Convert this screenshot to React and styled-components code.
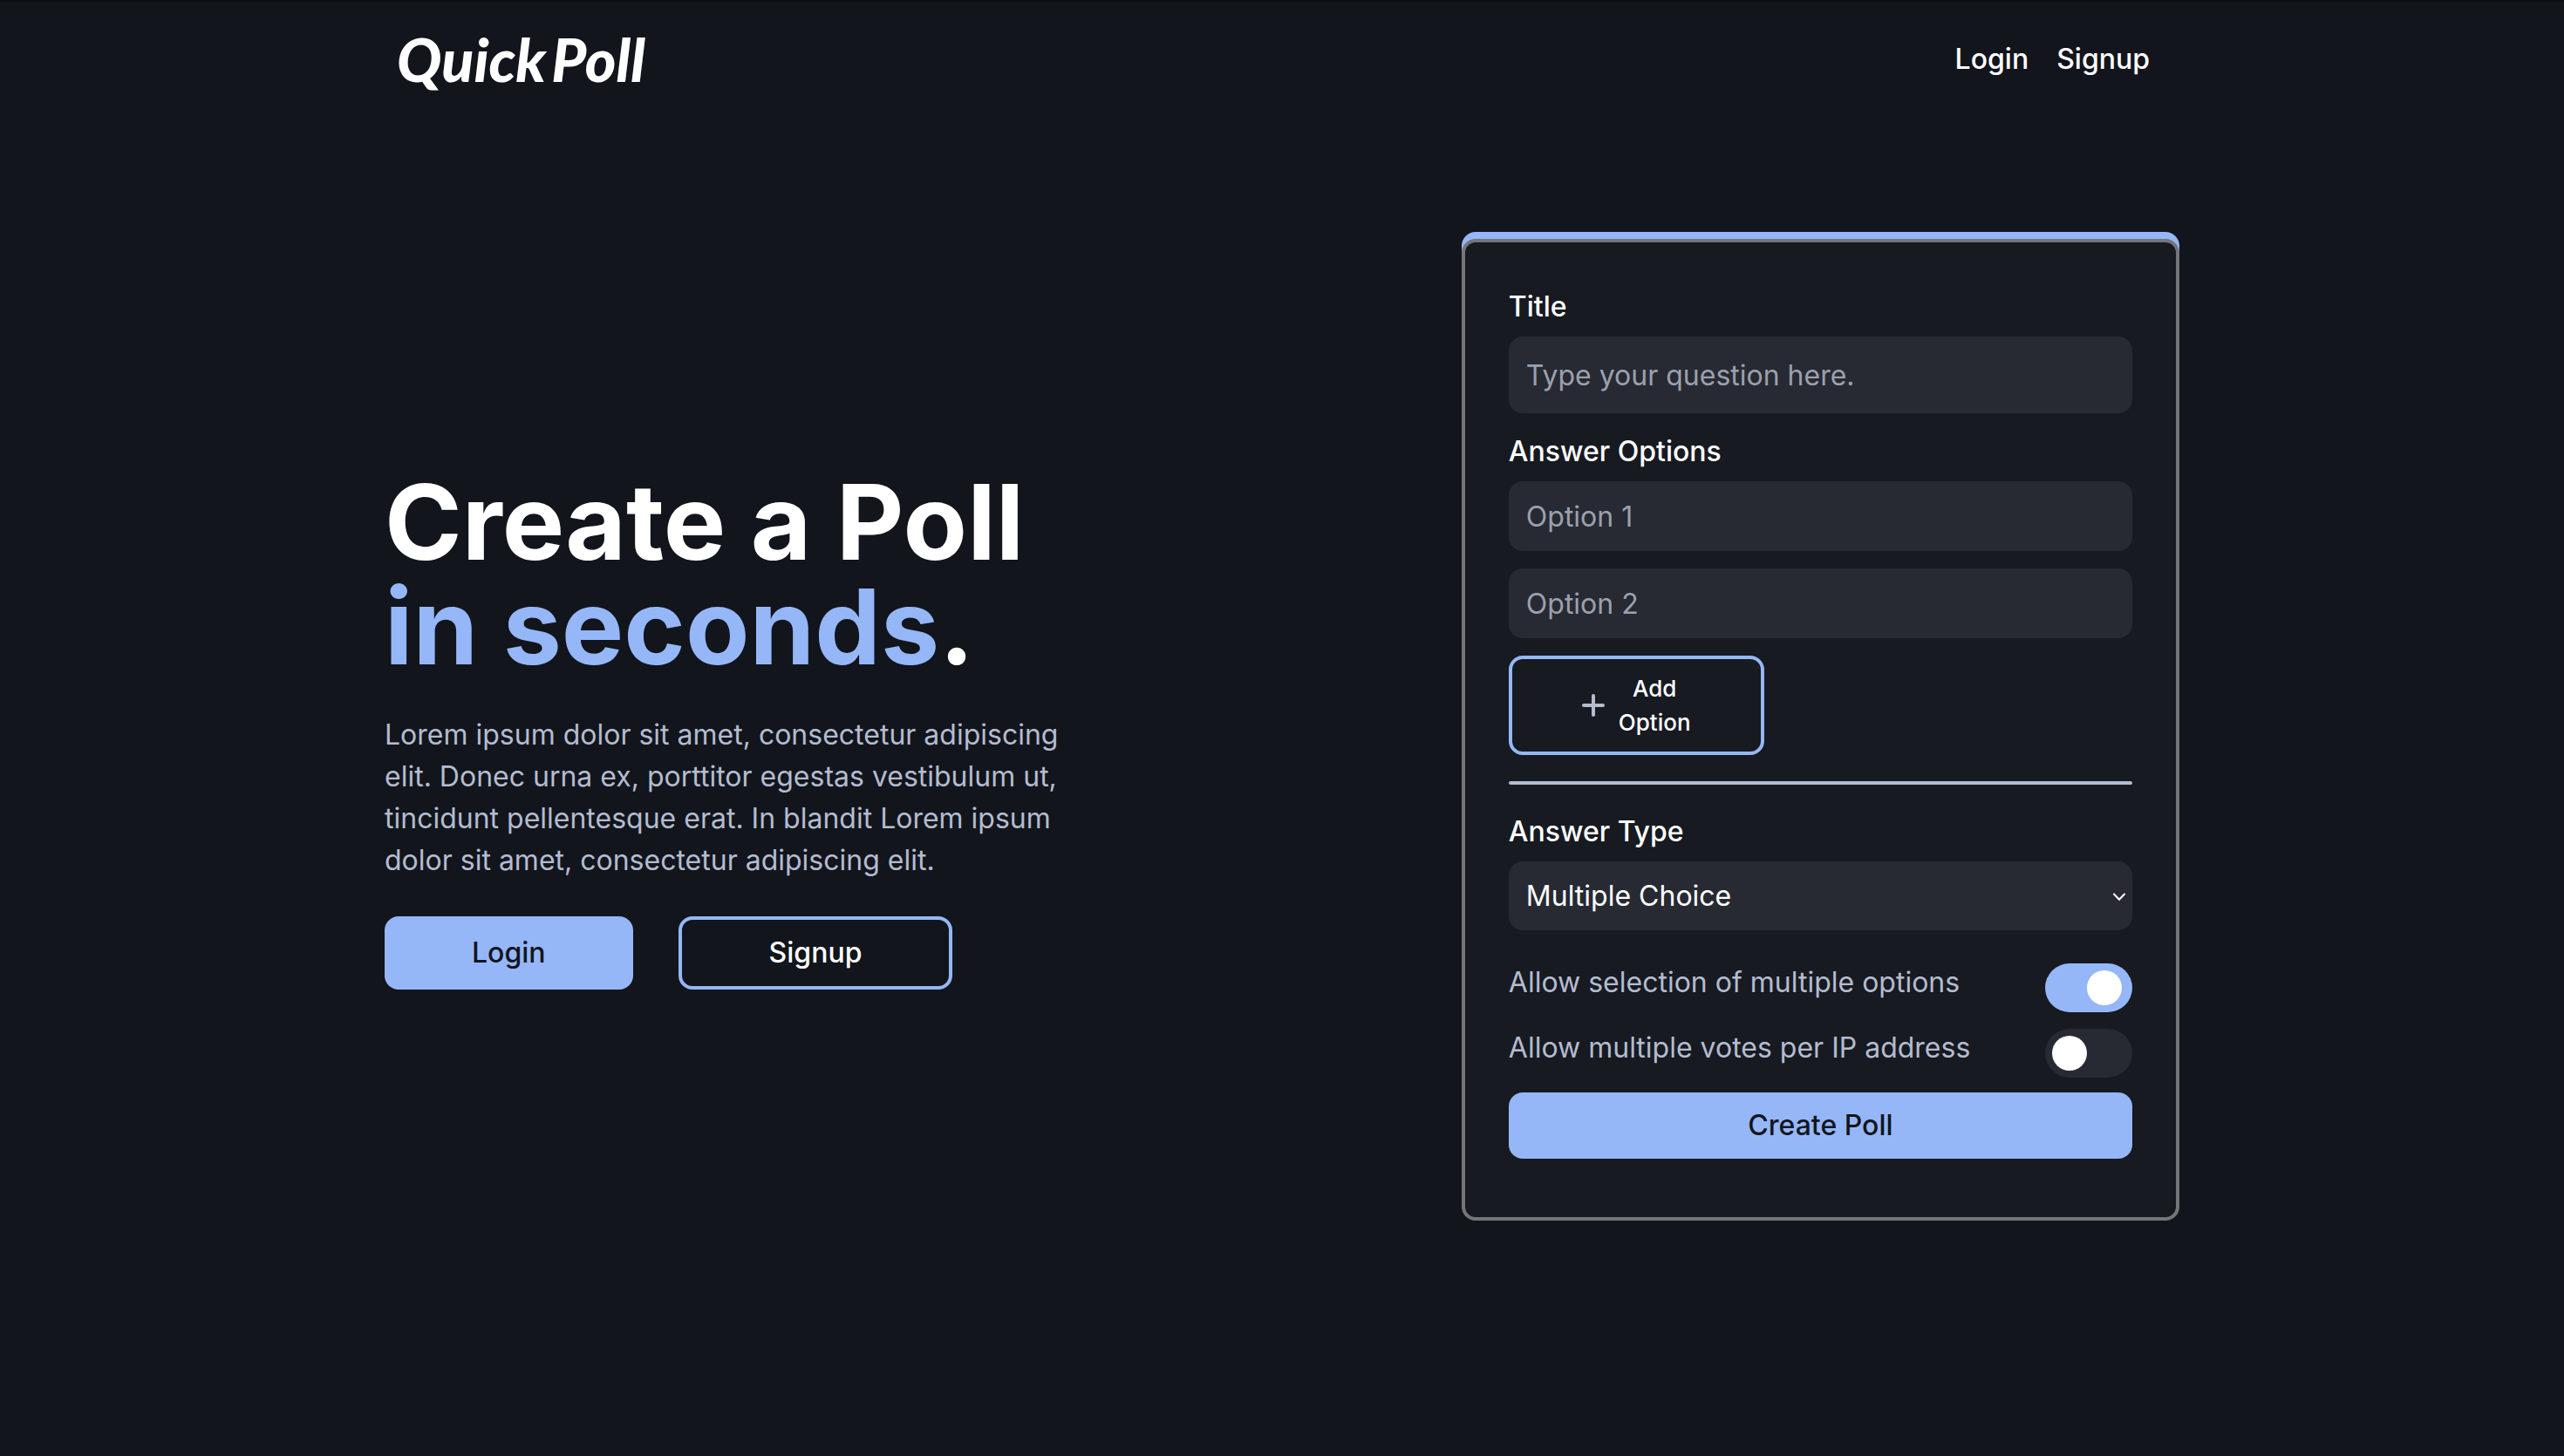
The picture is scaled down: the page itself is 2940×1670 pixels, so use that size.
import React, { useState } from "react";
import styled, { createGlobalStyle } from "styled-components";

const color = {
  page: "#12151c",
  card: "#171a21",
  field: "#272a33",
  accent: "#95b7f8",
  white: "#ffffff",
  muted: "#b4bcd0",
  placeholder: "#9ca0ad",
  outline: "#757578",
};

const GlobalStyle = createGlobalStyle`
  *, *::before, *::after { box-sizing: border-box; }
  body {
    margin: 0;
    background: ${color.page};
    color: ${color.white};
    font-family: Inter, "Liberation Sans", sans-serif;
    font-size: 32px;
    line-height: 48px;
  }
  h1, p { margin: 0; }
  button, input, select { font: inherit; }
`;

const Page = styled.div`
  min-height: 100vh;
  border-top: 2px solid #0c0c0d;
`;

const Container = styled.div`
  width: 70%;
  margin: 0 auto;
`;

const Header = styled.header`
  display: flex;
  align-items: center;
  justify-content: space-between;
  height: 132px;
  padding: 0 34px 0 14px;
`;

const Logo = styled.a`
  display: flex;
  gap: 6px;
  color: ${color.white};
  font-family: "Brush Script MT", Lato, sans-serif;
  font-size: 68px;
  font-style: italic;
  font-weight: 900;
  line-height: 80px;
  text-decoration: none;
`;

const Nav = styled.nav`
  display: flex;
  gap: 32px;
`;

const NavLink = styled.a`
  color: ${color.white};
  font-weight: 500;
  text-decoration: none;
`;

const Main = styled.main`
  display: flex;
  align-items: center;
  justify-content: space-between;
  padding: 140px 0;
`;

const Hero = styled.section`
  display: flex;
  flex-direction: column;
  gap: 40px;
  width: 40%;
`;

const Heading = styled.h1`
  font-size: 120px;
  font-weight: 700;
  line-height: 120px;
`;

const Accent = styled.span`
  color: ${color.accent};
`;

const Lead = styled.p`
  color: ${color.muted};
`;

const Actions = styled.div`
  display: flex;
  gap: 52px;
`;

const Button = styled.button`
  padding: ${(p) => p.$pad || "14px 24px"};
  border: ${(p) => (p.$outlined ? `4px solid ${color.accent}` : "0")};
  border-radius: 16px;
  background: ${(p) => (p.$outlined ? "transparent" : color.accent)};
  color: ${(p) => (p.$outlined ? color.white : color.page)};
  font-weight: 500;
  cursor: pointer;
`;

const Card = styled.form`
  display: flex;
  flex-direction: column;
  width: 40%;
  padding: 50px 50px 67px;
  border: 4px solid ${color.outline};
  border-radius: 16px;
  background: ${color.card};
  box-shadow: 0 -8px 0 0 ${color.accent};
`;

const Field = styled.div`
  display: flex;
  flex-direction: column;
  gap: 10px;
  margin-bottom: ${(p) => p.$after}px;
`;

const Label = styled.label`
  font-weight: 500;
`;

const OptionList = styled.div`
  display: flex;
  flex-direction: column;
  gap: 20px;
`;

const TextInput = styled.input`
  width: 100%;
  height: ${(p) => (p.$tall ? 88 : 80)}px;
  padding: 0 20px;
  border: 0;
  border-radius: 16px;
  background: ${color.field};
  color: ${color.white};
  &::placeholder {
    color: ${color.placeholder};
    opacity: 1;
  }
`;

const AddButton = styled.button`
  display: flex;
  align-items: center;
  justify-content: center;
  align-self: flex-start;
  gap: 16px;
  padding: 14px 80px;
  border: 4px solid ${color.accent};
  border-radius: 16px;
  background: transparent;
  color: ${color.white};
  font-size: 26px;
  font-weight: 500;
  line-height: 39px;
  cursor: pointer;
`;

const AddText = styled.span`
  width: min-content;
`;

const Divider = styled.hr`
  width: 100%;
  height: 4px;
  margin: 0 0 30px;
  border: 0;
  border-radius: 2px;
  background: ${color.muted};
`;

const SelectWrap = styled.div`
  position: relative;
`;

const Select = styled.select`
  display: block;
  width: 100%;
  height: 79px;
  padding: 0 20px;
  border: 0;
  border-radius: 16px;
  appearance: none;
  background: ${color.field};
  color: ${color.white};
`;

const Chevron = styled.svg`
  position: absolute;
  top: 36px;
  right: 8px;
  pointer-events: none;
`;

const Toggles = styled.div`
  display: flex;
  flex-direction: column;
  gap: 17px;
  margin-bottom: 17px;
`;

const ToggleRow = styled.div`
  display: flex;
  align-items: flex-end;
  justify-content: space-between;
  height: 58px;
`;

const ToggleLabel = styled.label`
  align-self: flex-start;
  color: ${color.muted};
`;

const Switch = styled.input`
  appearance: none;
  width: 100px;
  height: 56px;
  margin: 0;
  padding: 8px;
  border-radius: 28px;
  background: ${color.field};
  cursor: pointer;
  &::before {
    content: "";
    display: block;
    width: 40px;
    height: 40px;
    border-radius: 50%;
    background: ${color.white};
  }
  &:checked {
    background: ${color.accent};
  }
  &:checked::before {
    transform: translateX(40px);
  }
`;

function PlusIcon() {
  return (
    <svg width="26" height="26" viewBox="0 0 26 26" fill="none" stroke={color.muted} strokeWidth="4" strokeLinecap="round" aria-hidden="true">
      <path d="M13 2v22M2 13h22" />
    </svg>
  );
}

function Toggle({ id, label, initial }) {
  const [on, setOn] = useState(initial);
  return (
    <ToggleRow>
      <ToggleLabel htmlFor={id}>{label}</ToggleLabel>
      <Switch id={id} type="checkbox" role="switch" checked={on} onChange={(e) => setOn(e.target.checked)} />
    </ToggleRow>
  );
}

export default function App() {
  const [count, setCount] = useState(2);
  const options = Array.from({ length: count }, (_, i) => `Option ${i + 1}`);

  return (
    <Page>
      <GlobalStyle />
      <Container>
        <Header>
          <Logo href="#home">
            <span>Quick</span>
            <span>Poll</span>
          </Logo>
          <Nav>
            <NavLink href="#login">Login</NavLink>
            <NavLink href="#signup">Signup</NavLink>
          </Nav>
        </Header>
        <Main>
          <Hero>
            <Heading>
              Create a Poll
              <br />
              <Accent>in seconds</Accent>.
            </Heading>
            <Lead>
              Lorem ipsum dolor sit amet, consectetur adipiscing elit. Donec urna ex, porttitor egestas
              vestibulum ut, tincidunt pellentesque erat. In blandit Lorem ipsum dolor sit amet,
              consectetur adipiscing elit.
            </Lead>
            <Actions>
              <Button type="button" $pad="18px 100px">Login</Button>
              <Button type="button" $outlined $pad="14px 100px">Signup</Button>
            </Actions>
          </Hero>
          <Card onSubmit={(e) => e.preventDefault()}>
            <Field $after={20}>
              <Label htmlFor="title">Title</Label>
              <TextInput id="title" $tall placeholder="Type your question here." />
            </Field>
            <Field $after={30}>
              <Label htmlFor="option-1">Answer Options</Label>
              <OptionList>
                {options.map((name, i) => (
                  <TextInput key={name} id={`option-${i + 1}`} aria-label={name} placeholder={name} />
                ))}
                <AddButton type="button" onClick={() => setCount(count + 1)}>
                  <PlusIcon />
                  <AddText>Add Option</AddText>
                </AddButton>
              </OptionList>
            </Field>
            <Divider />
            <Field $after={36}>
              <Label htmlFor="answer-type">Answer Type</Label>
              <SelectWrap>
                <Select id="answer-type" defaultValue="multiple">
                  <option value="multiple">Multiple Choice</option>
                </Select>
                <Chevron width="14" height="10" viewBox="0 0 14 10" fill="none" stroke={color.white} strokeWidth="2" strokeLinecap="round" aria-hidden="true">
                  <path d="M1 1.5 7 7.8 13 1.5" />
                </Chevron>
              </SelectWrap>
            </Field>
            <Toggles>
              <Toggle id="multi-select" label="Allow selection of multiple options" initial={true} />
              <Toggle id="multi-vote" label="Allow multiple votes per IP address" initial={false} />
            </Toggles>
            <Button type="submit">Create Poll</Button>
          </Card>
        </Main>
      </Container>
    </Page>
  );
}
